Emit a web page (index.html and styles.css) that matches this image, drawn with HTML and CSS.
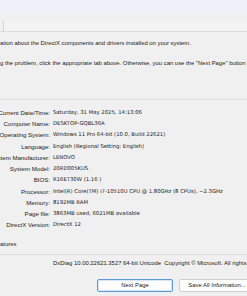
FILE: index.html
```
<!DOCTYPE html>
<html lang="en">

<head>
    <meta charset="UTF-8">
    <meta name="viewport" content="width=device-width, initial-scale=1.0">
    <title>DirectX Diagnostic Tool</title>
    <link rel="stylesheet" href="styles.css">
</head>

<body>
    <div class="titlebar"></div>
    <div class="tabstrip">
        <div class="tab"></div>
    </div>
    <div class="panel">
        <p class="intro">ation about the DirectX components and drivers installed on your system.</p>
        <p class="intro">g the problem, click the appropriate tab above. Otherwise, you can use the "Next Page" button below to visit each page in sequence.</p>
        <div class="sep sep-top"></div>
        <div class="info">
            <div class="label"><span>Current Date/Time:</span></div><span class="value">Saturday, 31 May 2025, 14:13:06</span>
            <div class="label"><span>Computer Name:</span></div><span class="value">DESKTOP-GQBL36A</span>
            <div class="label"><span>Operating System:</span></div><span class="value">Windows 11 Pro 64-bit (10.0, Build 22621)</span>
            <div class="label"><span>Language:</span></div><span class="value">English (Regional Setting: English)</span>
            <div class="label"><span>System Manufacturer:</span></div><span class="value">LENOVO</span>
            <div class="label"><span>System Model:</span></div><span class="value">20RD005KUS</span>
            <div class="label"><span>BIOS:</span></div><span class="value">R16ET30W (1.16 )</span>
            <div class="label"><span>Processor:</span></div><span class="value">Intel(R) Core(TM) i7-10510U CPU @ 1.80GHz (8 CPUs), ~2.3GHz</span>
            <div class="label"><span>Memory:</span></div><span class="value">8192MB RAM</span>
            <div class="label"><span>Page file:</span></div><span class="value">3863MB used, 6021MB available</span>
            <div class="label"><span>DirectX Version:</span></div><span class="value">DirectX 12</span>
        </div>
        <p class="check">atures</p>
        <div class="sep sep-bottom"></div>
        <p class="footer">DxDiag 10.00.22621.3527 64-bit Unicode&nbsp; Copyright © Microsoft. All rights reserved.</p>
    </div>
    <div class="buttons">
        <button class="btn btn-default">Next Page</button>
        <button class="btn">Save All Information...</button>
    </div>
</body>

</html>
```

FILE: styles.css
```
* {
    margin: 0;
    padding: 0;
    box-sizing: border-box;
}

body {
    width: 247px;
    height: 296px;
    overflow: hidden;
    background-color: #f0f0f0;
    color: #222;
    font-family: "Liberation Sans", Arial, sans-serif;
    font-size: 5.9px;
}

.titlebar {
    height: 14px;
    background-color: #edf1f7;
}

.tabstrip {
    height: 18px;
    padding-top: 7px;
    border-bottom: 1px solid #dadada;
}

.tab {
    margin-left: 3px;
    height: 10px;
    border-left: 1px solid #d4d4d4;
    background-color: #f3f3f3;
}

.panel {
    padding-top: 6px;
}

.intro {
    white-space: nowrap;
    overflow: hidden;
    line-height: 10px;
    height: 10px;
    margin-bottom: 10px;
}

.sep {
    height: 1px;
    background-color: #dcdcdc;
}

.sep-top {
    margin-top: 31px;
}

.info {
    display: grid;
    grid-template-columns: 50px 1fr;
    column-gap: 3px;
    margin-top: 6.8px;
    line-height: 11.27px;
    white-space: nowrap;
}

.label {
    display: flex;
    justify-content: flex-end;
    font-size: 6.1px;
}

.value {
    overflow: hidden;
    font-family: "DejaVu Sans", Verdana, sans-serif;
    font-size: 5.3px;
}

.check {
    margin-top: 8.2px;
    line-height: 10px;
}

.sep-bottom {
    margin-top: 5px;
}

.footer {
    margin-top: 3px;
    padding-left: 53px;
    line-height: 10px;
    white-space: nowrap;
    overflow: hidden;
}

.buttons {
    display: flex;
    gap: 6px;
    margin-top: 11px;
    padding-left: 97px;
}

.btn {
    flex: none;
    width: 76px;
    height: 13px;
    font-family: inherit;
    font-size: 5.9px;
    color: #222;
    background-color: #fdfdfd;
    border: 1px solid #cfcfcf;
    border-radius: 2px;
}

.btn-default {
    border-color: #5b9bd5;
    box-shadow: inset 0 0 0 1px #d6e8f8;
}
```
